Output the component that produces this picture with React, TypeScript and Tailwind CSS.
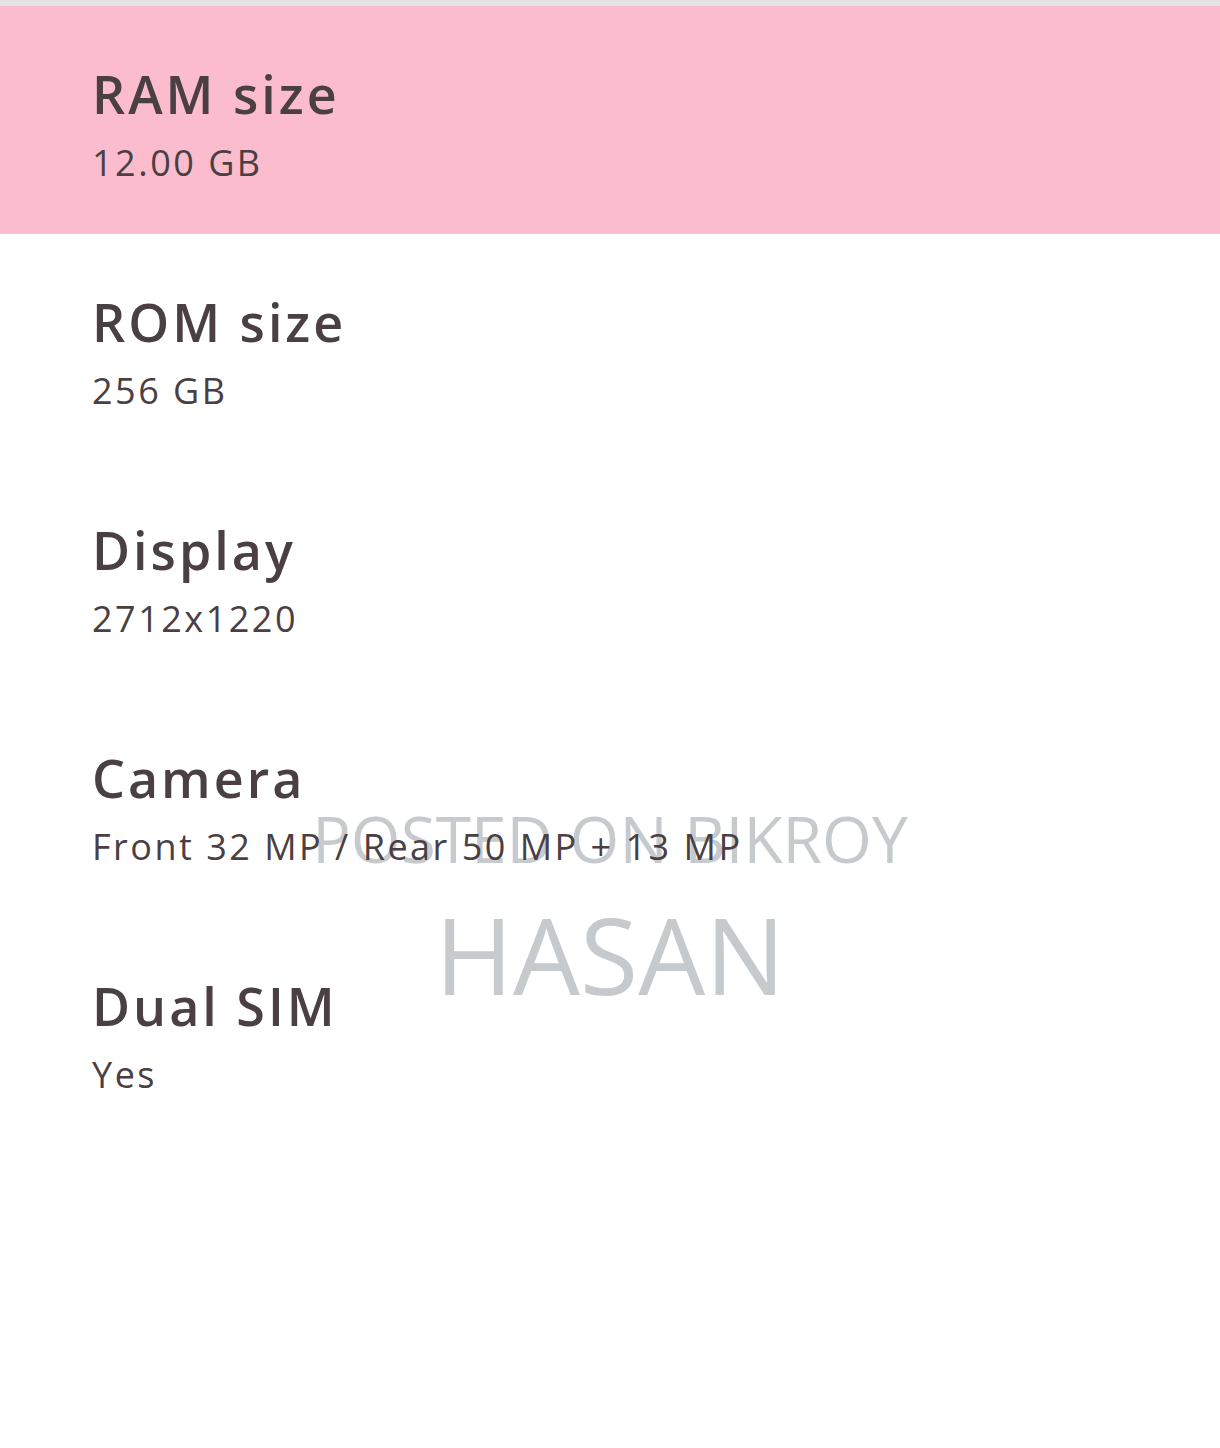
import React from "react";

const specs = [
  { label: "RAM size", value: "12.00 GB", highlight: true },
  { label: "ROM size", value: "256 GB" },
  { label: "Display", value: "2712x1220" },
  { label: "Camera", value: "Front 32 MP / Rear 50 MP + 13 MP" },
  { label: "Dual SIM", value: "Yes" },
];

export default function App() {
  return (
    <div className="relative w-[1220px] h-[1448px] bg-white border-t-[6px] border-[#e4e2e3] font-['Open_Sans',sans-serif] text-[#4a4043]">
      {/* watermark */}
      <div className="absolute left-0 right-0 top-[788px] flex flex-col items-center text-[#c6cacc] font-['Open_Sans',sans-serif] pointer-events-none">
        <div className="text-[64px] leading-[90px]">POSTED ON BIKROY</div>
        <div className="text-[106px] leading-[120px] mt-[10px]">HASAN</div>
      </div>

      <div className="relative flex flex-col">
        {specs.map((s) => (
          <div
            key={s.label}
            className={`h-[228px] pl-[92px] pt-[54px] flex flex-col ${s.highlight ? "bg-[#fbbdcd]" : ""}`}
          >
            <div className="text-[52px] leading-[68px] font-semibold tracking-[3px]">{s.label}</div>
            <div className="text-[36px] leading-[48px] tracking-[2.5px] mt-[11px]">{s.value}</div>
          </div>
        ))}
      </div>
    </div>
  );
}
